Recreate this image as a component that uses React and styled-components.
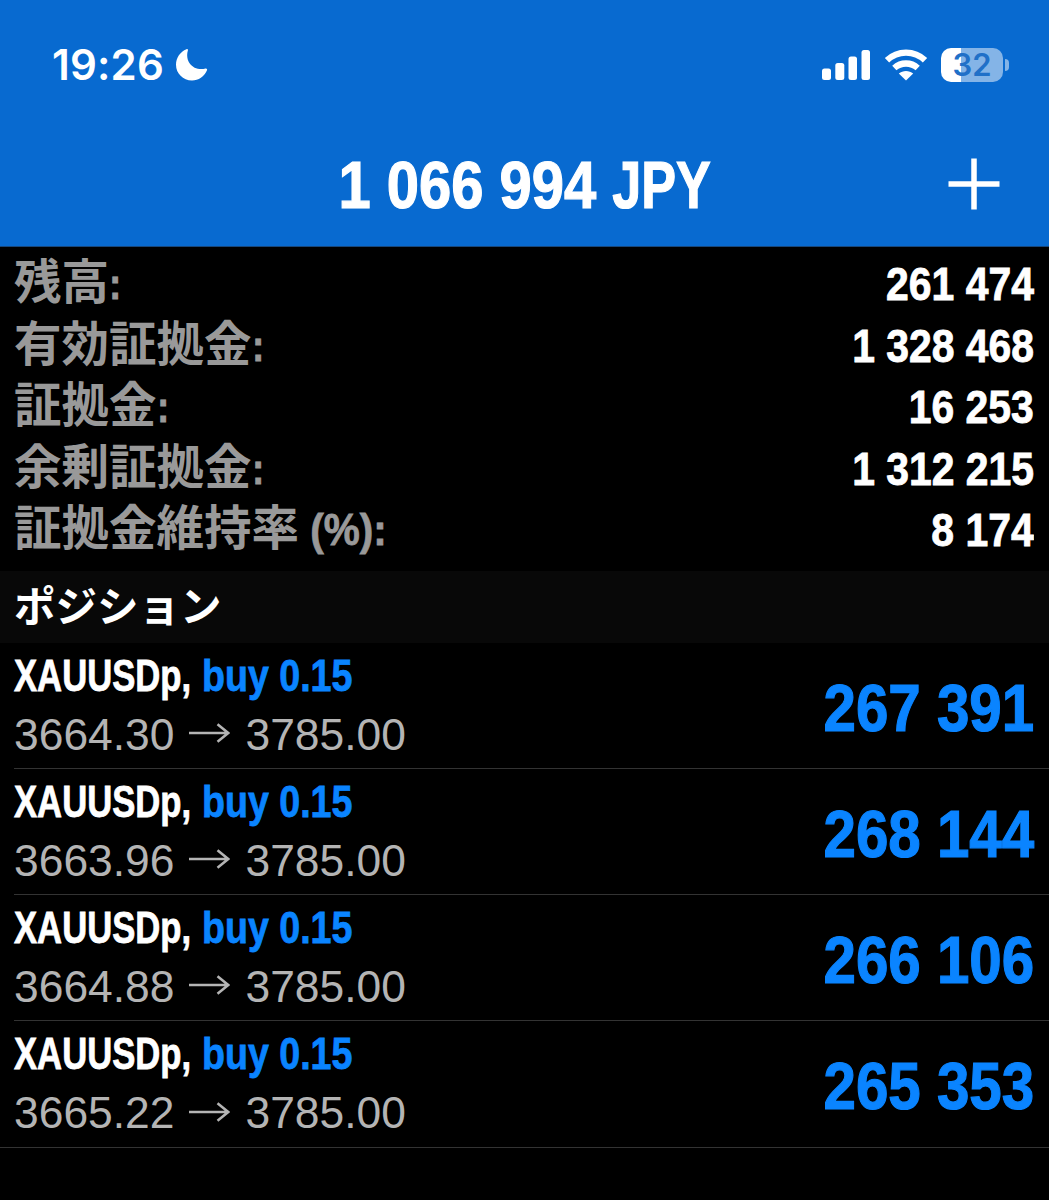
import styled, { createGlobalStyle } from "styled-components";

const GlobalStyle = createGlobalStyle`
body {
    margin: 0;
    background-color: #000;
    color: #fff;
    font-family: "Liberation Sans", "Noto Sans CJK JP", sans-serif;
}
`;

const Page = styled.div`
width: 1049px;
height: 1200px;
overflow: hidden;
background-color: #000;
`;

const Header = styled.header`
box-sizing: border-box;
height: 247px;
background-color: #086ad0;
border-bottom: 1px solid #17477c;
`;

const StatusBar = styled.div`
box-sizing: border-box;
display: flex;
align-items: center;
justify-content: space-between;
height: 129px;
padding: 0 40px 0 52px;
`;

const StatusGroup = styled.div`
display: flex;
align-items: center;
gap: ${({$gap}) => $gap}px;
`;

const Clock = styled.div`
font-family: Inter, sans-serif;
font-size: 42px;
font-weight: 600;
line-height: 50px;
letter-spacing: 0.2px;
`;

const Battery = styled.div`
display: flex;
align-items: center;
gap: 2px;
`;

const BatteryBody = styled.div`
display: flex;
align-items: center;
justify-content: center;
width: 62px;
height: 34px;
border-radius: 10px;
background: linear-gradient(90deg, #fff 32%, #84b4e7 32%);
color: #2070c8;
font-family: Inter, sans-serif;
font-size: 31px;
font-weight: 600;
line-height: 34px;
`;

const BatteryTip = styled.div`
width: 4px;
height: 12px;
border-radius: 0 4px 4px 0;
background-color: #84b4e7;
`;

const TitleBar = styled.div`
display: grid;
grid-template-columns: 100px 1fr 100px;
align-items: center;
height: 110px;
svg {
    margin-left: -1px;
}
`;

// Condensed bold face, squeezed from the regular width
const Condensed = styled.div`
font-family: "Liberation Sans", sans-serif;
font-size: ${({$size}) => $size}px;
font-weight: bold;
line-height: 1;
white-space: pre;
color: ${({$color}) => $color || "#fff"};
-webkit-text-stroke: 0.018em;
transform: scaleX(${({$stretch}) => $stretch || 0.87});
transform-origin: ${({$origin}) => $origin || "left"} center;
`;

const Title = styled(Condensed)`
grid-column: 2;
text-align: center;
`;

const Currency = styled.span`
display: inline-block;
margin-right: -13px;
transform: scaleX(0.9);
transform-origin: left center;
`;

const Profit = styled(Condensed)`
padding-top: 3px;
`;

const Summary = styled.div`
box-sizing: border-box;
height: 324px;
padding: 6px 15px 0 14px;
`;

const SummaryRow = styled.div`
display: flex;
align-items: center;
justify-content: space-between;
height: 61.5px;
`;

const Label = styled.div`
display: flex;
align-items: center;
height: 61px;
color: #999;
`;

const LabelText = styled.div`
height: 61px;
font-size: 47.5px;
font-weight: 700;
line-height: 60px;
`;

const SectionTitle = styled.div`
box-sizing: border-box;
height: 72px;
padding-left: 14px;
background-color: #080808;
font-family: "Noto Sans CJK JP", sans-serif;
font-size: 41.5px;
font-weight: 700;
line-height: 67px;
`;

const Position = styled.div`
box-sizing: border-box;
display: flex;
align-items: center;
justify-content: space-between;
height: 126px;
margin-left: 14px;
padding-right: 15px;
border-bottom: 1px solid #333;
&:last-child {
    height: 127px;
    margin-left: 0;
    padding-left: 14px;
}
`;

const PositionInfo = styled.div`
display: flex;
flex-direction: column;
gap: 14px;
padding-bottom: 1px;
`;

const Deal = styled.div`
display: flex;
`;

const SymbolName = styled(Condensed)`
margin-right: -42px;
`;

const Prices = styled.div`
display: flex;
align-items: center;
gap: 15px;
color: #b4b4b4;
font-size: 44.4px;
line-height: 46px;
svg {
    margin-bottom: 3px;
}
`;

const summary = [
    {label: "残高", value: "261 474"},
    {label: "有効証拠金", value: "1 328 468"},
    {label: "証拠金", value: "16 253"},
    {label: "余剰証拠金", value: "1 312 215"},
    {label: "証拠金維持率", unit: " (%)", value: "8 174"},
];

const positions = [
    {open: "3664.30", current: "3785.00", profit: "267 391"},
    {open: "3663.96", current: "3785.00", profit: "268 144"},
    {open: "3664.88", current: "3785.00", profit: "266 106"},
    {open: "3665.22", current: "3785.00", profit: "265 353"},
];

function MoonIcon() {
    return(
        <svg width="33" height="34" viewBox="0 0 33 34" fill="#fff">
            <path d="M11.500 1.200C12.300 0.800 13.200 1.500 12.900 2.400C9.500 13.500 18.500 23.500 30.500 20.600C31.600 20.300 32.500 21.200 32 22.200C29.300 28.500 23.500 32.500 17 32.500C8 32.500 1 25.500 1 16.800C1 9.800 5.200 3.600 11.500 1.200Z"/>
        </svg>
    );
}

function SignalIcon() {
    return(
        <svg width="49" height="32" viewBox="0 0 49 32" fill="#fff">
            <rect x="0" y="19.500" width="9" height="11.500" rx="2.500"/>
            <rect x="13.300" y="14" width="9" height="17" rx="2.500"/>
            <rect x="26.500" y="7.500" width="8.500" height="23.500" rx="2.500"/>
            <rect x="39.500" y="1" width="8.500" height="30" rx="2.500"/>
        </svg>
    );
}

function WifiIcon() {
    return(
        <svg width="44" height="32" viewBox="0 0 44 32" fill="none" stroke="#fff" strokeWidth="6.300">
            <path d="M3 11.300C13.700 1.100 30.300 1.100 41 11.300"/>
            <path d="M10.300 19C17 13 27 13 33.700 19"/>
            <path d="M22 31.500L14.800 24.500C18.800 21 25.200 21 29.200 24.500Z" fill="#fff" stroke="none"/>
        </svg>
    );
}

function PlusIcon() {
    return(
        <svg width="52" height="52" viewBox="0 0 52 52" stroke="#fff" strokeWidth="5.500">
            <path d="M26 0.500V51.500M0.500 26H51.500"/>
        </svg>
    );
}

function ArrowIcon() {
    return(
        <svg width="41" height="20" viewBox="0 0 41 20" fill="none" stroke="#b4b4b4" strokeWidth="2.500">
            <path d="M0 10H39M28.500 1.200L39.200 10L28.500 18.800"/>
        </svg>
    );
}

export default function App() {
    return(
        <Page>
        <GlobalStyle />
        <Header>
            <StatusBar>
                <StatusGroup $gap={11}>
                    <Clock>19:26</Clock>
                    <MoonIcon />
                </StatusGroup>
                <StatusGroup $gap={13}>
                    <SignalIcon />
                    <WifiIcon />
                    <Battery>
                        <BatteryBody>32</BatteryBody>
                        <BatteryTip />
                    </Battery>
                </StatusGroup>
            </StatusBar>
            <TitleBar>
                <Title $size={67} $stretch={0.865} $origin="center">1 066 994 <Currency>JPY</Currency></Title>
                <PlusIcon />
            </TitleBar>
        </Header>
        <Summary>
            {summary.map(({label, unit, value}) => (
                <SummaryRow key={label}>
                    <Label>
                        <LabelText>{label}</LabelText>
                        <Condensed $size={45} $color="#999" $stretch={unit ? 0.9 : 0.82}>{unit}:</Condensed>
                    </Label>
                    <Condensed $size={47} $origin="right">{value}</Condensed>
                </SummaryRow>
            ))}
        </Summary>
        <SectionTitle>ポジション</SectionTitle>
        <div>
        {positions.map(({open, current, profit}) => (
            <Position key={open}>
                <PositionInfo>
                    <Deal>
                        <SymbolName $size={45} $stretch={0.77}>XAUUSDp,</SymbolName>
                        <Condensed $size={45} $stretch={0.835} $color="#0a84ff">buy 0.15</Condensed>
                    </Deal>
                    <Prices>
                        {open}
                        <ArrowIcon />
                        {current}
                    </Prices>
                </PositionInfo>
                <Profit $size={67} $color="#0a84ff" $origin="right">{profit}</Profit>
            </Position>
        ))}
        </div>
        </Page>
    );
}
